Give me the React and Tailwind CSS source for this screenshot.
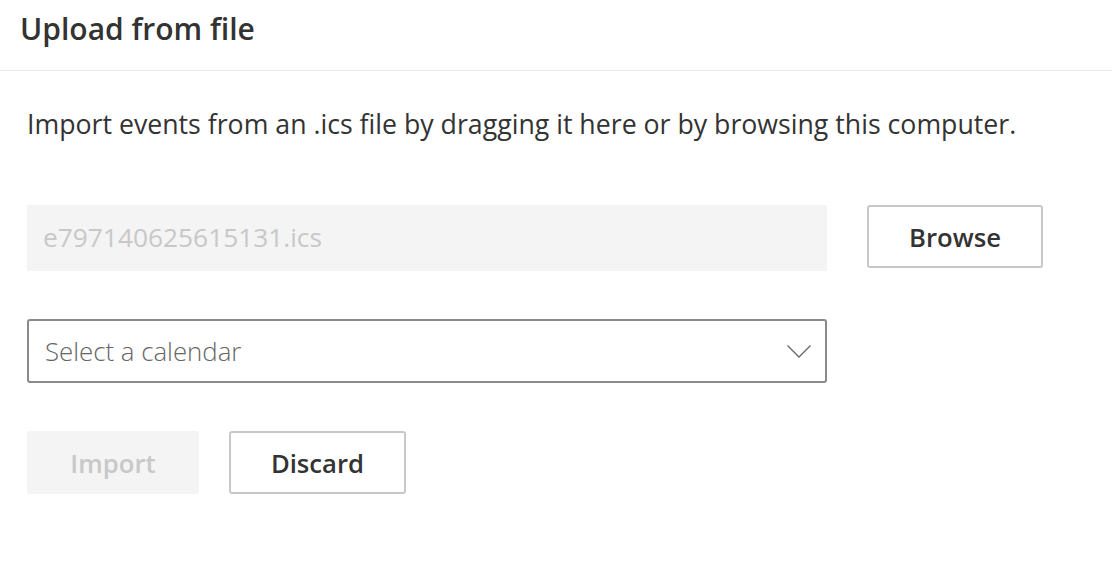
export default function App() {
  const font = { fontFamily: '"Open Sans", "Noto Sans", sans-serif' };
  return (
    <div className="w-[1112px] h-[587px] bg-white overflow-hidden" style={font}>
      <div className="h-[71px] border-b border-[#ebebeb] flex items-center px-[20px]">
        <h1 className="text-[30px] font-semibold text-[#333333] leading-none -mt-[12px]">Upload from file</h1>
      </div>
      <div className="px-[27px]">
        <p className="mt-[36px] text-[26.7px] leading-[34px] text-[#333333]">
          Import events from an .ics file by dragging it here or by browsing this computer.
        </p>
        <div className="mt-[64px] flex items-start">
          <div className="w-[800px] h-[66px] bg-[#f4f4f4] flex items-center px-[16px] text-[26.3px] text-[#c8c8c8]">
            e797140625615131.ics
          </div>
          <button className="ml-[40px] w-[176px] h-[63px] pt-[3px] border-2 border-[#c8c8c8] rounded-[3px] bg-white text-[25.7px] font-semibold text-[#333333]">
            Browse
          </button>
        </div>
        <div className="mt-[48px] w-[800px] h-[64px] border-2 border-[#8a8a8a] rounded-[3px] flex items-center justify-between pl-[16px] pr-[14px]">
          <span className="text-[25.8px] font-light text-[#666666]">Select a calendar</span>
          <svg width="24" height="13" viewBox="0 0 24 13" fill="none">
            <path d="M0.5 0.5 L12 12 L23.5 0.5" stroke="#666666" strokeWidth="1.3" />
          </svg>
        </div>
        <div className="mt-[48px] flex items-center gap-[30px]">
          <button className="w-[172px] h-[63px] pt-[3px] bg-[#f4f4f4] rounded-[3px] text-[25.7px] font-semibold text-[#c8c8c8]">
            Import
          </button>
          <button className="w-[177px] h-[63px] pt-[3px] border-2 border-[#c8c8c8] rounded-[3px] bg-white text-[25.7px] font-semibold text-[#333333]">
            Discard
          </button>
        </div>
      </div>
    </div>
  );
}
